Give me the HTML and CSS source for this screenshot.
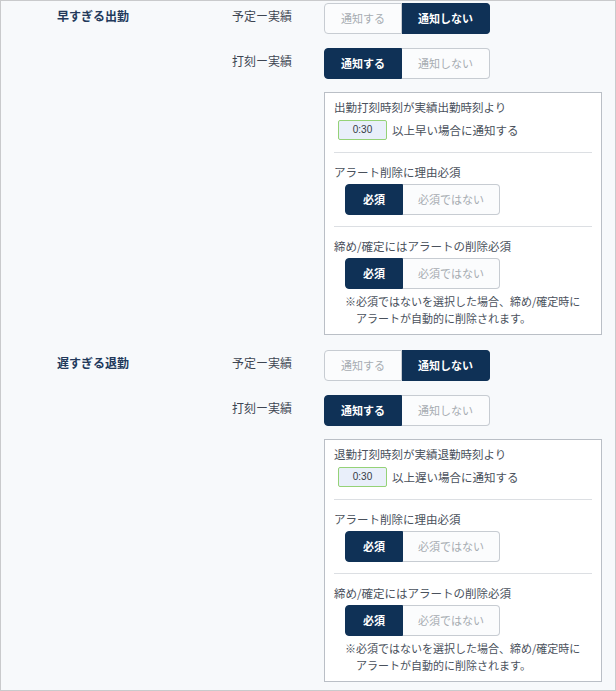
FILE: index.html
```html
<!DOCTYPE html>
<html lang="ja">
<head>
<meta charset="utf-8">
<title>アラート設定</title>
<link rel="stylesheet" href="styles.css">
</head>
<body>
<div class="frame">
  <section class="group">
    <div class="group-title">早すぎる出勤</div>
    <div class="group-body">
      <div class="row">
        <div class="sub">予定ー実績</div>
        <div class="seg">
          <span class="opt">通知する</span><span class="opt on">通知しない</span>
        </div>
      </div>
      <div class="row">
        <div class="sub">打刻ー実績</div>
        <div class="seg">
          <span class="opt on">通知する</span><span class="opt">通知しない</span>
        </div>
      </div>
      <div class="panel">
        <div class="pane pane-first">
          <div class="ptext">出勤打刻時刻が実績出勤時刻より</div>
          <div class="time-row">
            <span class="time">0:30</span><span class="ptext">以上早い場合に通知する</span>
          </div>
        </div>
        <div class="pane">
          <div class="ptext">アラート削除に理由必須</div>
          <div class="seg seg-sm">
            <span class="opt on">必須</span><span class="opt">必須ではない</span>
          </div>
        </div>
        <div class="pane pane-last">
          <div class="ptext">締め/確定にはアラートの削除必須</div>
          <div class="seg seg-sm">
            <span class="opt on">必須</span><span class="opt">必須ではない</span>
          </div>
          <p class="note">※必須ではないを選択した場合、締め/確定時に<br>アラートが自動的に削除されます。</p>
        </div>
      </div>
    </div>
  </section>

  <section class="group">
    <div class="group-title">遅すぎる退勤</div>
    <div class="group-body">
      <div class="row">
        <div class="sub">予定ー実績</div>
        <div class="seg">
          <span class="opt">通知する</span><span class="opt on">通知しない</span>
        </div>
      </div>
      <div class="row">
        <div class="sub">打刻ー実績</div>
        <div class="seg">
          <span class="opt on">通知する</span><span class="opt">通知しない</span>
        </div>
      </div>
      <div class="panel">
        <div class="pane pane-first">
          <div class="ptext">退勤打刻時刻が実績退勤時刻より</div>
          <div class="time-row">
            <span class="time">0:30</span><span class="ptext">以上遅い場合に通知する</span>
          </div>
        </div>
        <div class="pane">
          <div class="ptext">アラート削除に理由必須</div>
          <div class="seg seg-sm">
            <span class="opt on">必須</span><span class="opt">必須ではない</span>
          </div>
        </div>
        <div class="pane pane-last">
          <div class="ptext">締め/確定にはアラートの削除必須</div>
          <div class="seg seg-sm">
            <span class="opt on">必須</span><span class="opt">必須ではない</span>
          </div>
          <p class="note">※必須ではないを選択した場合、締め/確定時に<br>アラートが自動的に削除されます。</p>
        </div>
      </div>
    </div>
  </section>
</div>
</body>
</html>
```

FILE: styles.css
```css
* {
  box-sizing: border-box;
}

html, body {
  margin: 0;
  padding: 0;
}

body {
  font-family: "Noto Sans CJK JP", "Noto Sans", sans-serif;
  background: #f7f9fb;
}

.frame {
  width: 616px;
  height: 691px;
  border: 1px solid #c9cacc;
  background: #f7f9fb;
  padding: 2px 0 0 56px;
  overflow: hidden;
}

.group {
  display: flex;
}

.group + .group {
  margin-top: 15px;
}

.group-title {
  width: 175px;
  padding-top: 4px;
  font-size: 12px;
  line-height: 18px;
  font-weight: 700;
  color: #22395b;
}

.group-body {
  display: flex;
  flex-direction: column;
}

.row {
  display: flex;
}

.row + .row {
  margin-top: 14px;
}

.sub {
  width: 92px;
  padding-top: 4px;
  font-size: 12px;
  line-height: 18px;
  color: #3d4552;
}

.seg {
  display: flex;
  height: 31px;
}

.opt {
  display: block;
  height: 31px;
  padding: 0 16px;
  line-height: 29px;
  font-size: 11px;
  color: #a7acb2;
  background: #fbfcfd;
  border: 1px solid #c7ccd2;
  white-space: nowrap;
  text-align: center;
}

.opt:first-child {
  border-radius: 4px 0 0 4px;
}

.opt:last-child {
  border-radius: 0 4px 4px 0;
}

.opt + .opt {
  border-left: 0;
}

.opt.on {
  background: #0f3156;
  border-color: #0f3156;
  color: #ffffff;
  font-weight: 700;
}

.seg-sm {
  margin: 3px 0 0 11px;
}

.seg-sm .opt:first-child {
  min-width: 58px;
}

.seg-sm .opt:last-child {
  padding: 0 15px;
}

.panel {
  width: 278px;
  margin: 13px 0 0 92px;
  padding: 0 9px;
  background: #ffffff;
  border: 1px solid #babfc6;
}

.pane {
  padding: 10px 0 11px;
  border-top: 1px solid #dcdfe3;
}

.pane-first {
  padding: 5px 0 12px;
  border-top: 0;
}

.pane-last {
  padding-bottom: 7px;
}

.ptext {
  font-size: 11.5px;
  line-height: 18px;
  color: #4a515c;
  white-space: nowrap;
}

.time-row {
  display: flex;
  align-items: center;
  margin: 4px 0 0 4px;
}

.time {
  width: 49px;
  height: 20px;
  margin-right: 5px;
  border: 1px solid #95d277;
  border-radius: 2px;
  background: #e9effa;
  font-family: "Liberation Sans", "Noto Sans", sans-serif;
  font-size: 10px;
  line-height: 18px;
  text-align: center;
  color: #333a44;
}

.note {
  margin: 4px 0 0 11px;
  padding-left: 11px;
  text-indent: -11px;
  font-size: 11px;
  line-height: 17px;
  color: #4a515c;
  white-space: nowrap;
}
```
